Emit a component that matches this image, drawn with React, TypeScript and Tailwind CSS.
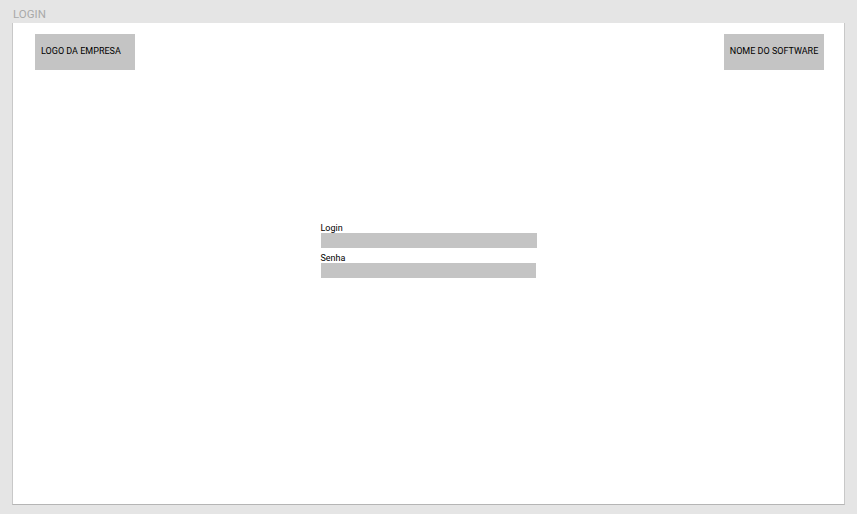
export default function App() {
  return (
    <div
      className="w-[857px] h-[514px] bg-[#e5e5e5] pl-[12px] pt-[7px]"
      style={{ fontFamily: 'Roboto, "Liberation Sans", Arial, sans-serif' }}
    >
      <div className="h-[16px] pl-[1px] text-[11.5px] leading-[14px] text-[#a9a9a9]">LOGIN</div>
      <div className="w-[833px] h-[482px] bg-white border-l border-b border-r border-[#c8c8c8] border-b-[#b5b5b5] flex flex-col">
        <div className="flex justify-between pl-[22px] pr-[20px] pt-[11px]">
          <div className="w-[100px] h-[36px] bg-[#c4c4c4] flex items-center pl-[6px] text-[9px] text-black">
            LOGO DA EMPRESA
          </div>
          <div className="w-[100px] h-[36px] bg-[#c4c4c4] flex items-center justify-center text-[9px] text-black">
            NOME DO SOFTWARE
          </div>
        </div>
        <div className="flex justify-center pt-[153px]">
          <div className="w-[216px] flex flex-col">
            <div className="text-[9px] leading-[10px] text-black">Login</div>
            <div className="w-[216px] h-[15px] bg-[#c4c4c4]" />
            <div className="mt-[5px] text-[9px] leading-[10px] text-black">Senha</div>
            <div className="w-[215px] h-[15px] bg-[#c4c4c4]" />
          </div>
        </div>
      </div>
    </div>
  );
}
